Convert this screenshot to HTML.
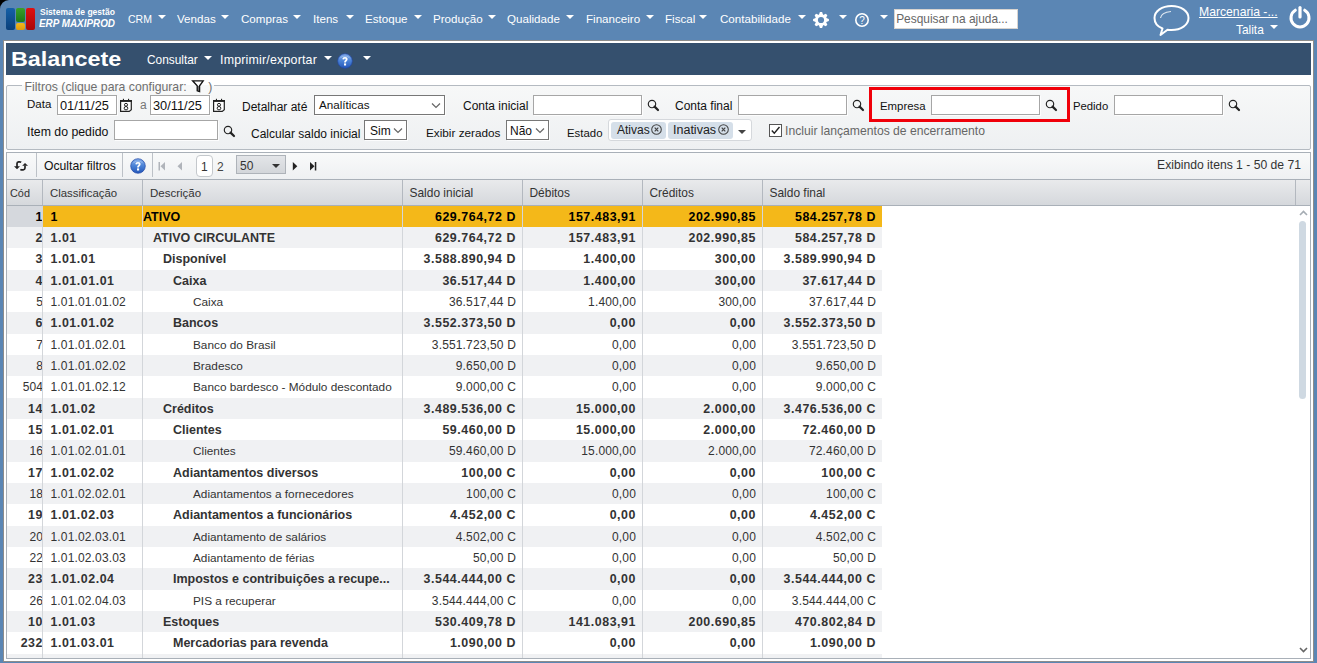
<!DOCTYPE html>
<html><head><meta charset="utf-8">
<style>
*{box-sizing:border-box;margin:0;padding:0}
html,body{width:1317px;height:663px;overflow:hidden;background:#000}
body{font-family:"Liberation Sans",sans-serif;font-size:12px;color:#222;position:relative}
.a{position:absolute;white-space:nowrap}
svg{position:absolute;overflow:visible}
#top{position:absolute;left:0;top:0;width:1317px;height:663px;background:#5b86b4;border-top-left-radius:9px}
.logo{position:absolute;border-radius:2px}
.mi{position:absolute;top:11px;color:#fff;font-size:11.6px;line-height:16px;white-space:nowrap}
.tri{position:absolute;width:0;height:0;border-left:4px solid transparent;border-right:4px solid transparent;border-top:4.5px solid #fff}
.trd{position:absolute;width:0;height:0;border-left:4.5px solid transparent;border-right:4.5px solid transparent;border-top:4.5px solid #333}
#main{position:absolute;left:3px;top:40px;width:1311px;height:622px;background:#fff;border:1px solid #8d8c8b}
#hdr{position:absolute;left:6px;top:43px;width:1305px;height:32px;background:#35506e}
.hm{position:absolute;color:#fff;font-size:12px;line-height:15px;white-space:nowrap}
#fs{position:absolute;left:6px;top:85px;width:1305px;height:65px;border:1px solid #b4bac1;border-radius:2px;background:linear-gradient(#f7f8f8,#eef0f2)}
#legend{position:absolute;left:22px;top:79.5px;height:14px;padding:0 2px 0 2.6px;background:linear-gradient(#fff 0,#fff 5.5px,#f7f8f8 5.5px);color:#6f6f6f;font-size:12.25px;line-height:14px;white-space:nowrap}
.lb{position:absolute;font-size:12px;line-height:14px;color:#111;white-space:nowrap}
.in{position:absolute;height:20px;background:#fff;border:1px solid #a6a6a6;box-shadow:1px 1px 0 rgba(255,255,255,0.8)}
.intx{position:absolute;font-size:12.8px;line-height:14px;color:#111;white-space:nowrap}
#tb{position:absolute;left:6px;top:152px;width:1305px;height:28px;border:1px solid #a9b0b8;border-bottom:none;background:linear-gradient(#f9fafa,#eef0f2)}
.sep{position:absolute;top:153px;width:1px;height:24px;background:#bcc1c7}
#gh{position:absolute;left:6px;top:179px;width:1305px;height:27px;border:1px solid #a9b0b8;border-top:1px solid #a9b0b8;border-bottom:1px solid #a9b0b8;background:linear-gradient(#e9eaec,#d5d8dc)}
.ghs{position:absolute;top:180px;width:1px;height:25px;background:#b3b8bf}
.gl{position:absolute;top:186px;font-size:11.6px;line-height:14px;color:#333;white-space:nowrap}
#gb{position:absolute;left:6px;top:206px;width:1305px;height:453px;border:1px solid #a9b0b8;border-top:none;overflow:hidden;background:#fff}
.r{position:absolute;left:0;width:875px;height:21.3333px;color:#333;font-size:12px;line-height:21.3333px}
.r.alt{background:#f0f1f3}
.r.sel{background:#f4b819;color:#000}
.r.sel .c0{background:#d5d8dd}
.r div{position:absolute;top:0;height:100%;white-space:nowrap;line-height:22.5px}
.c0{left:0;width:36px;text-align:right;padding-right:0px;letter-spacing:0.1px}
.c1{left:43.5px;letter-spacing:0.15px}
.c2{font-size:11.8px}
.r.b .c2{font-size:12.5px}
.n{width:120px;text-align:right;padding-right:6px;letter-spacing:0.15px}
.n3{left:395px}.n4{left:515px}.n5{left:635px}.n6{left:755px}
.r.b{font-weight:bold;font-size:12.4px}
.r.b .c0,.r.b .c1,.r.b .n{letter-spacing:0.55px}
.vl{position:absolute;top:0;width:1px;height:453px;background:#d3d6da}
</style></head><body>
<div id="top">
  <!-- logo -->
  <div class="logo" style="left:6px;top:8px;width:9px;height:22px;background:linear-gradient(#1560a8,#0b3f7a)"></div>
  <div class="logo" style="left:16px;top:8px;width:9px;height:14px;background:linear-gradient(#3aa02a,#1c7a18)"></div>
  <div class="logo" style="left:16px;top:23px;width:9px;height:7px;background:linear-gradient(#f2b81a,#e09a10)"></div>
  <div class="logo" style="left:26px;top:8px;width:9px;height:22px;background:linear-gradient(#e01010,#a80808)"></div>
  <div class="a" style="left:40px;top:6.5px;color:#fff;font-size:9.2px;font-weight:bold;line-height:11px;transform:scaleX(0.928);transform-origin:0 0">Sistema de gestão</div>
  <div class="a" style="left:39.3px;top:17.2px;color:#fff;font-size:11.4px;font-weight:bold;font-style:italic;line-height:13px;transform:scaleX(0.868);transform-origin:0 0">ERP MAXIPROD</div>

  <div class="mi" style="left:128px;font-size:10.5px">CRM</div><div class="tri" style="left:158px;top:15px"></div>
  <div class="mi" style="left:177px">Vendas</div><div class="tri" style="left:221px;top:15px"></div>
  <div class="mi" style="left:241px">Compras</div><div class="tri" style="left:293px;top:15px"></div>
  <div class="mi" style="left:313px">Itens</div><div class="tri" style="left:346px;top:15px"></div>
  <div class="mi" style="left:365px">Estoque</div><div class="tri" style="left:414px;top:15px"></div>
  <div class="mi" style="left:433px">Produção</div><div class="tri" style="left:488px;top:15px"></div>
  <div class="mi" style="left:507px">Qualidade</div><div class="tri" style="left:566px;top:15px"></div>
  <div class="mi" style="left:586px">Financeiro</div><div class="tri" style="left:646px;top:15px"></div>
  <div class="mi" style="left:665px">Fiscal</div><div class="tri" style="left:699px;top:15px"></div>
  <div class="mi" style="left:720px">Contabilidade</div><div class="tri" style="left:798px;top:15px"></div>
  <!-- gear -->
  <svg style="left:813px;top:12px" width="16" height="16" viewBox="0 0 16 16">
    <g fill="#fff" transform="translate(8 8)">
      <path d="M-1.1 -7.9 H1.1 L2.3 -4.5 H-2.3 Z M-1.1 7.9 H1.1 L2.3 4.5 H-2.3 Z"/>
      <path d="M-1.1 -7.9 H1.1 L2.3 -4.5 H-2.3 Z M-1.1 7.9 H1.1 L2.3 4.5 H-2.3 Z" transform="rotate(45)"/>
      <path d="M-1.1 -7.9 H1.1 L2.3 -4.5 H-2.3 Z M-1.1 7.9 H1.1 L2.3 4.5 H-2.3 Z" transform="rotate(90)"/>
      <path d="M-1.1 -7.9 H1.1 L2.3 -4.5 H-2.3 Z M-1.1 7.9 H1.1 L2.3 4.5 H-2.3 Z" transform="rotate(135)"/>
      <circle r="5.7"/>
    </g>
    <circle cx="8" cy="8" r="3.1" fill="#5b86b4"/>
  </svg>
  <div class="tri" style="left:839px;top:15px"></div>
  <svg style="left:855px;top:13px" width="14" height="14" viewBox="0 0 14 14">
    <circle cx="7" cy="7" r="6.2" fill="none" stroke="#fff" stroke-width="1.6"/>
    <text x="7" y="10.8" text-anchor="middle" font-family="Liberation Sans" font-size="10" fill="#fff">?</text>
  </svg>
  <div class="tri" style="left:880px;top:15px"></div>
  <div class="a" style="left:894px;top:9px;width:124px;height:20px;background:#fff;border:1px solid #d8d4d0;color:#666;font-size:11.9px;line-height:18px;padding-left:1.2px">Pesquisar na ajuda...</div>

  <!-- chat -->
  <svg style="left:1150px;top:2px" width="44" height="36" viewBox="0 0 44 36">
    <path d="M12.5 26.5 C6 24 4.5 20 4.5 16 C4.5 9 12 4 21.5 4 C31 4 38.5 9 38.5 16 C38.5 23 31 28 21.5 28 C20 28 18.5 27.9 17.5 27.7 L10.5 33 Z" fill="none" stroke="#fff" stroke-width="2" stroke-linejoin="round"/>
    <path d="M10.5 16 C11 12.5 15 10 21 9.5" fill="none" stroke="#fff" stroke-width="1.2" opacity="0.8"/>
  </svg>
  <div class="a" style="left:1199px;top:5px;color:#fff;font-size:12.2px;line-height:15px;text-decoration:underline">Marcenaria -...</div>
  <div class="a" style="left:1236px;top:22.5px;color:#fff;font-size:11.9px;line-height:15px">Talita</div>
  <div class="tri" style="left:1270px;top:25px"></div>
  <!-- power -->
  <svg style="left:1288px;top:5px" width="24" height="26" viewBox="0 0 24 26">
    <path d="M7.3 5.2 A9 9 0 1 0 16.7 5.2" fill="none" stroke="#fff" stroke-width="3" stroke-linecap="round"/>
    <line x1="12" y1="2.5" x2="12" y2="12" stroke="#fff" stroke-width="3.2" stroke-linecap="round"/>
  </svg>
</div>

<div id="main"></div>
<div id="hdr">
  <div class="a" style="left:4.6px;top:2.6px;color:#fff;font-size:21px;font-weight:bold;line-height:26px;transform:scaleX(1.112);transform-origin:0 0">Balancete</div>
  <div class="hm" style="left:140.5px;top:9.5px;font-size:12.4px;transform:scaleX(0.957);transform-origin:0 0">Consultar</div>
  <div class="tri" style="left:198px;top:13px"></div>
  <div class="hm" style="left:214px;top:9.5px;font-size:12.4px;letter-spacing:0.2px">Imprimir/exportar</div>
  <div class="tri" style="left:318px;top:13px"></div>
  <svg style="left:331px;top:10px" width="16" height="16" viewBox="0 0 16 16">
    <defs><linearGradient id="bq" x1="0" y1="0" x2="0" y2="1"><stop offset="0" stop-color="#7fa8e8"/><stop offset="0.5" stop-color="#4a82d6"/><stop offset="1" stop-color="#2456b8"/></linearGradient></defs>
    <circle cx="8" cy="8" r="7.3" fill="url(#bq)" stroke="#2148a6" stroke-width="0.7"/>
  <path d="M3.2 5.2 C4.5 2.6 11.5 2.6 12.8 5.2" fill="none" stroke="#b8d0f4" stroke-width="0.8" opacity="0.7"/>
  <path d="M5.4 6.3 C5.4 4.9 6.5 4.1 8 4.1 C9.6 4.1 10.6 5 10.6 6.2 C10.6 7.8 8.9 8 8.9 9.6 H7.1 C7.1 7.4 8.7 7.3 8.7 6.3 C8.7 5.8 8.4 5.5 8 5.5 C7.5 5.5 7.2 5.9 7.2 6.5 Z" fill="#fff"/>
  <rect x="7" y="10.4" width="2.1" height="2.1" fill="#fff"/>
  </svg>
  <div class="tri" style="left:357px;top:13px"></div>
</div>

<!-- filters -->
<div id="fs"></div>
<div id="legend">Filtros (clique para configurar:<span style="display:inline-block;width:21.5px"></span>)</div>
<svg style="left:191px;top:79px" width="14" height="14" viewBox="0 0 14 14">
  <path d="M6.2 7 H8.6 V12.6 L6.2 11.8 Z" fill="#777"/>
  <path d="M1.6 1.8 H12.2 L8.6 6.8 V12.6 L6.2 11.8 V6.8 Z" fill="none" stroke="#111" stroke-width="1.3" stroke-linejoin="miter"/>
</svg>

<div class="lb" style="left:27px;top:97px;font-size:11.5px">Data</div>
<div class="in" style="left:57px;top:95px;width:60px"></div>
<div class="intx" style="left:60px;top:98.5px">01/11/25</div>
<svg style="left:119px;top:98px" width="14" height="15" viewBox="0 0 14 15">
  <path d="M1.6 2.6 H12.3 V11.6 L10.2 13.4 H1.6 Z" fill="#fff" stroke="#222" stroke-width="1.2"/>
  <rect x="1" y="2" width="11.9" height="1.9" fill="#222"/>
  <rect x="3.9" y="0.8" width="1.1" height="1.4" fill="#222"/><rect x="9" y="0.8" width="1.1" height="1.4" fill="#222"/>
  <ellipse cx="7" cy="6.8" rx="1.6" ry="1.4" fill="none" stroke="#222" stroke-width="1"/>
  <ellipse cx="7" cy="10.2" rx="1.85" ry="1.7" fill="none" stroke="#222" stroke-width="1"/>
</svg>
<div class="lb" style="left:140px;top:98px;color:#777">a</div>
<div class="in" style="left:150px;top:95px;width:60px"></div>
<div class="intx" style="left:153px;top:98.5px">30/11/25</div>
<svg style="left:212px;top:98px" width="14" height="15" viewBox="0 0 14 15">
  <path d="M1.6 2.6 H12.3 V11.6 L10.2 13.4 H1.6 Z" fill="#fff" stroke="#222" stroke-width="1.2"/>
  <rect x="1" y="2" width="11.9" height="1.9" fill="#222"/>
  <rect x="3.9" y="0.8" width="1.1" height="1.4" fill="#222"/><rect x="9" y="0.8" width="1.1" height="1.4" fill="#222"/>
  <ellipse cx="7" cy="6.8" rx="1.6" ry="1.4" fill="none" stroke="#222" stroke-width="1"/>
  <ellipse cx="7" cy="10.2" rx="1.85" ry="1.7" fill="none" stroke="#222" stroke-width="1"/>
</svg>

<div class="lb" style="left:242px;top:100px">Detalhar até</div>
<div class="in" style="left:314px;top:95px;width:131px;border-color:#777"></div>
<div class="lb" style="left:319px;top:98px;font-size:11.65px">Analíticas</div>
<svg style="left:431px;top:102px" width="10" height="7" viewBox="0 0 10 7"><path d="M1 1.5 L5 5.5 L9 1.5" fill="none" stroke="#666" stroke-width="1.2"/></svg>

<div class="lb" style="left:463px;top:99px">Conta inicial</div>
<div class="in" style="left:533px;top:95px;width:109px"></div>
<svg class="srch" style="left:647px;top:99px" width="13" height="13" viewBox="0 0 13 13"><circle cx="5" cy="5" r="3.7" fill="none" stroke="#222" stroke-width="1.15"/><path d="M7.6 7.6 L11 11" stroke="#222" stroke-width="2.2" stroke-linecap="round"/></svg>

<div class="lb" style="left:675px;top:99px">Conta final</div>
<div class="in" style="left:738px;top:95px;width:109px"></div>
<svg style="left:852px;top:99px" width="13" height="13" viewBox="0 0 13 13"><circle cx="5" cy="5" r="3.7" fill="none" stroke="#222" stroke-width="1.15"/><path d="M7.6 7.6 L11 11" stroke="#222" stroke-width="2.2" stroke-linecap="round"/></svg>

<div class="a" style="left:869px;top:87px;width:201px;height:35px;border:3px solid #f0000a"></div>
<div class="lb" style="left:880px;top:99px;font-size:11.4px">Empresa</div>
<div class="in" style="left:931px;top:95px;width:109px"></div>
<svg style="left:1045px;top:99px" width="13" height="13" viewBox="0 0 13 13"><circle cx="5" cy="5" r="3.7" fill="none" stroke="#222" stroke-width="1.15"/><path d="M7.6 7.6 L11 11" stroke="#222" stroke-width="2.2" stroke-linecap="round"/></svg>

<div class="lb" style="left:1073px;top:99px;font-size:11.3px">Pedido</div>
<div class="in" style="left:1114px;top:95px;width:109px"></div>
<svg style="left:1228px;top:99px" width="13" height="13" viewBox="0 0 13 13"><circle cx="5" cy="5" r="3.7" fill="none" stroke="#222" stroke-width="1.15"/><path d="M7.6 7.6 L11 11" stroke="#222" stroke-width="2.2" stroke-linecap="round"/></svg>

<div class="lb" style="left:27px;top:125px;font-size:12.3px">Item do pedido</div>
<div class="in" style="left:114px;top:120px;width:104px"></div>
<svg style="left:223px;top:125px" width="13" height="13" viewBox="0 0 13 13"><circle cx="5" cy="5" r="3.7" fill="none" stroke="#222" stroke-width="1.15"/><path d="M7.6 7.6 L11 11" stroke="#222" stroke-width="2.2" stroke-linecap="round"/></svg>

<div class="lb" style="left:251px;top:127px">Calcular saldo inicial</div>
<div class="in" style="left:364px;top:120px;width:43px;border-color:#777"></div>
<div class="lb" style="left:370px;top:124px">Sim</div>
<svg style="left:393px;top:127px" width="10" height="7" viewBox="0 0 10 7"><path d="M1 1.5 L5 5.5 L9 1.5" fill="none" stroke="#666" stroke-width="1.2"/></svg>

<div class="lb" style="left:426px;top:126px;font-size:11.75px">Exibir zerados</div>
<div class="in" style="left:506px;top:120px;width:43px;border-color:#777"></div>
<div class="lb" style="left:510px;top:124px">Não</div>
<svg style="left:535px;top:127px" width="10" height="7" viewBox="0 0 10 7"><path d="M1 1.5 L5 5.5 L9 1.5" fill="none" stroke="#666" stroke-width="1.2"/></svg>

<div class="lb" style="left:567px;top:125.5px;font-size:11.4px">Estado</div>
<div class="a" style="left:608px;top:119px;width:144px;height:22px;background:#fff;border:1px solid #d5d8dc;border-radius:3px"></div>
<div class="a" style="left:611px;top:122px;width:55px;height:17px;background:#d5dfe9;border-radius:3px"></div>
<div class="lb" style="left:617px;top:123px;color:#222">Ativas</div>
<svg style="left:651px;top:124px" width="11" height="11" viewBox="0 0 11 11"><circle cx="5.5" cy="5.5" r="4.8" fill="none" stroke="#444" stroke-width="1.05"/><path d="M3.7 3.7 L7.3 7.3 M7.3 3.7 L3.7 7.3" stroke="#444" stroke-width="1.2"/></svg>
<div class="a" style="left:668px;top:122px;width:65px;height:17px;background:#d5dfe9;border-radius:3px"></div>
<div class="lb" style="left:673px;top:123px;color:#222;font-size:12.5px">Inativas</div>
<svg style="left:718px;top:124px" width="11" height="11" viewBox="0 0 11 11"><circle cx="5.5" cy="5.5" r="4.8" fill="none" stroke="#444" stroke-width="1.05"/><path d="M3.7 3.7 L7.3 7.3 M7.3 3.7 L3.7 7.3" stroke="#444" stroke-width="1.2"/></svg>
<div class="trd" style="left:738px;top:129.5px;border-top-color:#444;border-left-width:4px;border-right-width:4px;border-top-width:4px"></div>
<div class="a" style="left:769px;top:124px;width:13px;height:13px;background:#fff;border:1px solid #555"></div>
<svg style="left:769px;top:124px" width="13" height="13" viewBox="0 0 13 13"><path d="M2.8 6.5 L5.3 9.3 L10.5 3" fill="none" stroke="#222" stroke-width="1.4"/></svg>
<div class="lb" style="left:785px;top:124px;color:#666;font-size:12.16px">Incluir lançamentos de encerramento</div>

<!-- toolbar -->
<div id="tb"></div>
<svg style="left:12px;top:159px" width="18" height="14" viewBox="0 0 18 14">
  <path d="M9.2 3.3 C8 2.5 5 2.5 5 4.5 V8" fill="none" stroke="#222" stroke-width="1.7"/>
  <path d="M2 7.2 L8 7.2 L5 10.2 Z" fill="#222"/>
  <path d="M8.4 10.3 C9.5 11.3 13 11.3 13 9 V6.5" fill="none" stroke="#222" stroke-width="1.7"/>
  <path d="M10.2 6.8 L16 6.8 L13 4 Z" fill="#222"/>
</svg>
<div class="sep" style="left:36px"></div>
<div class="lb" style="left:44px;top:159px;color:#111;font-size:12.2px">Ocultar filtros</div>
<div class="sep" style="left:122px"></div>
<svg style="left:130px;top:158px" width="16" height="16" viewBox="0 0 16 16">
  <circle cx="8" cy="8" r="7.3" fill="url(#bq)" stroke="#2148a6" stroke-width="0.7"/>
  <path d="M3.2 5.2 C4.5 2.6 11.5 2.6 12.8 5.2" fill="none" stroke="#b8d0f4" stroke-width="0.8" opacity="0.7"/>
  <path d="M5.4 6.3 C5.4 4.9 6.5 4.1 8 4.1 C9.6 4.1 10.6 5 10.6 6.2 C10.6 7.8 8.9 8 8.9 9.6 H7.1 C7.1 7.4 8.7 7.3 8.7 6.3 C8.7 5.8 8.4 5.5 8 5.5 C7.5 5.5 7.2 5.9 7.2 6.5 Z" fill="#fff"/>
  <rect x="7" y="10.4" width="2.1" height="2.1" fill="#fff"/>
</svg>
<div class="sep" style="left:152px"></div>
<svg style="left:158px;top:162px" width="8" height="9" viewBox="0 0 8 9"><rect x="0.5" y="0" width="1.5" height="8.5" fill="#b0b4ba"/><path d="M7 0 V8.5 L2.5 4.25 Z" fill="#b0b4ba"/></svg>
<svg style="left:177px;top:162px" width="6" height="9" viewBox="0 0 6 9"><path d="M5 0 V8.5 L0.5 4.25 Z" fill="#b0b4ba"/></svg>
<div class="a" style="left:196px;top:155px;width:17px;height:22px;background:#fff;border:1px solid #c4c8cc;border-radius:4px"></div>
<div class="lb" style="left:201px;top:160px;color:#333">1</div>
<div class="lb" style="left:217px;top:160px;color:#444">2</div>
<div class="a" style="left:236px;top:155px;width:50px;height:19px;background:linear-gradient(#e3e5e8,#d3d6da);border:1px solid #aeb3b9"></div>
<div class="lb" style="left:240px;top:159px;color:#333">50</div>
<div class="trd" style="left:272px;top:164px;border-top-width:4.5px"></div>
<svg style="left:292px;top:162px" width="6" height="9" viewBox="0 0 6 9"><path d="M0.8 0 V8.5 L5.3 4.25 Z" fill="#222"/></svg>
<svg style="left:309px;top:162px" width="8" height="9" viewBox="0 0 8 9"><path d="M1 0 V8.5 L5.5 4.25 Z" fill="#222"/><rect x="5.8" y="0" width="1.5" height="8.5" fill="#222"/></svg>
<div class="lb" style="right:16px;top:158px;color:#333;font-size:12.16px">Exibindo itens 1 - 50 de 71</div>

<!-- grid header -->
<div id="gh"></div>
<div class="ghs" style="left:42px"></div>
<div class="ghs" style="left:142px"></div>
<div class="ghs" style="left:402px"></div>
<div class="ghs" style="left:522px"></div>
<div class="ghs" style="left:642px"></div>
<div class="ghs" style="left:762px"></div>
<div class="ghs" style="left:1295px"></div>
<div class="gl" style="left:10px;font-size:10.9px">Cód</div>
<div class="gl" style="left:50px;font-size:11.4px">Classificação</div>
<div class="gl" style="left:150px;font-size:11.5px">Descrição</div>
<div class="gl" style="left:409.5px;font-size:11.95px">Saldo inicial</div>
<div class="gl" style="left:529.5px;font-size:11.95px">Débitos</div>
<div class="gl" style="left:649.5px;font-size:11.95px">Créditos</div>
<div class="gl" style="left:769.5px;font-size:11.95px">Saldo final</div>

<!-- grid body -->
<div id="gb">
<div style="position:absolute;left:0;top:0;width:1px;height:0"></div>
<div class="r sel b" style="top:-0.330px"><div class="c0">1</div><div class="c1">1</div><div class="c2" style="left:136px">ATIVO</div><div class="n n3">629.764,72 D</div><div class="n n4">157.483,91</div><div class="n n5">202.990,85</div><div class="n n6">584.257,78 D</div></div>
<div class="r alt b" style="top:21.003px"><div class="c0">2</div><div class="c1">1.01</div><div class="c2" style="left:146px">ATIVO CIRCULANTE</div><div class="n n3">629.764,72 D</div><div class="n n4">157.483,91</div><div class="n n5">202.990,85</div><div class="n n6">584.257,78 D</div></div>
<div class="r b" style="top:42.337px"><div class="c0">3</div><div class="c1">1.01.01</div><div class="c2" style="left:156px">Disponível</div><div class="n n3">3.588.890,94 D</div><div class="n n4">1.400,00</div><div class="n n5">300,00</div><div class="n n6">3.589.990,94 D</div></div>
<div class="r alt b" style="top:63.670px"><div class="c0">4</div><div class="c1">1.01.01.01</div><div class="c2" style="left:166px">Caixa</div><div class="n n3">36.517,44 D</div><div class="n n4">1.400,00</div><div class="n n5">300,00</div><div class="n n6">37.617,44 D</div></div>
<div class="r" style="top:85.003px"><div class="c0">5</div><div class="c1">1.01.01.01.02</div><div class="c2" style="left:186px">Caixa</div><div class="n n3">36.517,44 D</div><div class="n n4">1.400,00</div><div class="n n5">300,00</div><div class="n n6">37.617,44 D</div></div>
<div class="r alt b" style="top:106.337px"><div class="c0">6</div><div class="c1">1.01.01.02</div><div class="c2" style="left:166px">Bancos</div><div class="n n3">3.552.373,50 D</div><div class="n n4">0,00</div><div class="n n5">0,00</div><div class="n n6">3.552.373,50 D</div></div>
<div class="r" style="top:127.670px"><div class="c0">7</div><div class="c1">1.01.01.02.01</div><div class="c2" style="left:186px">Banco do Brasil</div><div class="n n3">3.551.723,50 D</div><div class="n n4">0,00</div><div class="n n5">0,00</div><div class="n n6">3.551.723,50 D</div></div>
<div class="r alt" style="top:149.003px"><div class="c0">8</div><div class="c1">1.01.01.02.02</div><div class="c2" style="left:186px">Bradesco</div><div class="n n3">9.650,00 D</div><div class="n n4">0,00</div><div class="n n5">0,00</div><div class="n n6">9.650,00 D</div></div>
<div class="r" style="top:170.336px"><div class="c0">504</div><div class="c1">1.01.01.02.12</div><div class="c2" style="left:186px">Banco bardesco - Módulo descontado</div><div class="n n3">9.000,00 C</div><div class="n n4">0,00</div><div class="n n5">0,00</div><div class="n n6">9.000,00 C</div></div>
<div class="r alt b" style="top:191.670px"><div class="c0">14</div><div class="c1">1.01.02</div><div class="c2" style="left:156px">Créditos</div><div class="n n3">3.489.536,00 C</div><div class="n n4">15.000,00</div><div class="n n5">2.000,00</div><div class="n n6">3.476.536,00 C</div></div>
<div class="r b" style="top:213.003px"><div class="c0">15</div><div class="c1">1.01.02.01</div><div class="c2" style="left:166px">Clientes</div><div class="n n3">59.460,00 D</div><div class="n n4">15.000,00</div><div class="n n5">2.000,00</div><div class="n n6">72.460,00 D</div></div>
<div class="r alt" style="top:234.336px"><div class="c0">16</div><div class="c1">1.01.02.01.01</div><div class="c2" style="left:186px">Clientes</div><div class="n n3">59.460,00 D</div><div class="n n4">15.000,00</div><div class="n n5">2.000,00</div><div class="n n6">72.460,00 D</div></div>
<div class="r b" style="top:255.670px"><div class="c0">17</div><div class="c1">1.01.02.02</div><div class="c2" style="left:166px">Adiantamentos diversos</div><div class="n n3">100,00 C</div><div class="n n4">0,00</div><div class="n n5">0,00</div><div class="n n6">100,00 C</div></div>
<div class="r alt" style="top:277.003px"><div class="c0">18</div><div class="c1">1.01.02.02.01</div><div class="c2" style="left:186px">Adiantamentos a fornecedores</div><div class="n n3">100,00 C</div><div class="n n4">0,00</div><div class="n n5">0,00</div><div class="n n6">100,00 C</div></div>
<div class="r b" style="top:298.336px"><div class="c0">19</div><div class="c1">1.01.02.03</div><div class="c2" style="left:166px">Adiantamentos a funcionários</div><div class="n n3">4.452,00 C</div><div class="n n4">0,00</div><div class="n n5">0,00</div><div class="n n6">4.452,00 C</div></div>
<div class="r alt" style="top:319.670px"><div class="c0">20</div><div class="c1">1.01.02.03.01</div><div class="c2" style="left:186px">Adiantamento de salários</div><div class="n n3">4.502,00 C</div><div class="n n4">0,00</div><div class="n n5">0,00</div><div class="n n6">4.502,00 C</div></div>
<div class="r" style="top:341.003px"><div class="c0">22</div><div class="c1">1.01.02.03.03</div><div class="c2" style="left:186px">Adiantamento de férias</div><div class="n n3">50,00 D</div><div class="n n4">0,00</div><div class="n n5">0,00</div><div class="n n6">50,00 D</div></div>
<div class="r alt b" style="top:362.336px"><div class="c0">23</div><div class="c1">1.01.02.04</div><div class="c2" style="left:166px">Impostos e contribuições a recupe...</div><div class="n n3">3.544.444,00 C</div><div class="n n4">0,00</div><div class="n n5">0,00</div><div class="n n6">3.544.444,00 C</div></div>
<div class="r" style="top:383.669px"><div class="c0">26</div><div class="c1">1.01.02.04.03</div><div class="c2" style="left:186px">PIS a recuperar</div><div class="n n3">3.544.444,00 C</div><div class="n n4">0,00</div><div class="n n5">0,00</div><div class="n n6">3.544.444,00 C</div></div>
<div class="r alt b" style="top:405.003px"><div class="c0">10</div><div class="c1">1.01.03</div><div class="c2" style="left:156px">Estoques</div><div class="n n3">530.409,78 D</div><div class="n n4">141.083,91</div><div class="n n5">200.690,85</div><div class="n n6">470.802,84 D</div></div>
<div class="r b" style="top:426.336px"><div class="c0">232</div><div class="c1">1.01.03.01</div><div class="c2" style="left:166px">Mercadorias para revenda</div><div class="n n3">1.090,00 D</div><div class="n n4">0,00</div><div class="n n5">0,00</div><div class="n n6">1.090,00 D</div></div>
<div class="r alt" style="top:447.669px"></div>
<div class="vl" style="left:35px"></div>
<div class="vl" style="left:135px"></div>
<div class="vl" style="left:395px"></div>
<div class="vl" style="left:515px"></div>
<div class="vl" style="left:635px"></div>
<div class="vl" style="left:755px"></div>
<svg style="left:1292px;top:4px" width="9" height="6" viewBox="0 0 9 6"><path d="M1 5 L4.5 1.5 L8 5" fill="none" stroke="#a5acb3" stroke-width="1.6"/></svg>
<div style="position:absolute;left:1292px;top:15px;width:7px;height:178px;background:#cfd9e2;border-radius:4px"></div>
<svg style="left:1292px;top:441px" width="9" height="6" viewBox="0 0 9 6"><path d="M1 1 L4.5 4.5 L8 1" fill="none" stroke="#666" stroke-width="1.6"/></svg>
</div>
</body></html>
